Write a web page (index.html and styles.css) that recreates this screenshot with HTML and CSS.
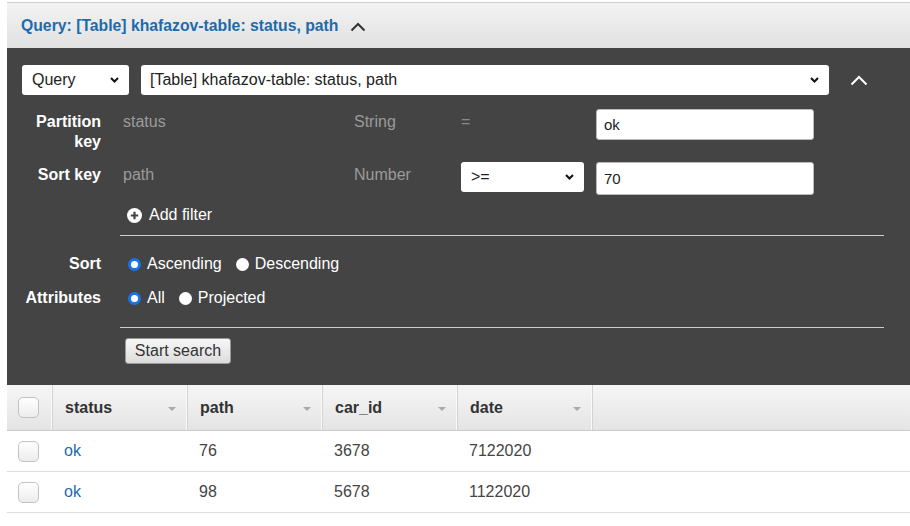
FILE: index.html
```html
<!DOCTYPE html>
<html>
<head>
<meta charset="utf-8">
<link rel="stylesheet" href="styles.css">
</head>
<body>
<div class="page">
  <div class="header">
    <span class="title">Query: [Table] khafazov-table: status, path</span>
    <svg class="hchev" width="16" height="10" viewBox="0 0 16 10"><polyline points="1.5,8.5 8,2 14.5,8.5" fill="none" stroke="#333" stroke-width="2"/></svg>
  </div>
  <div class="panel">
    <div class="toprow">
      <div class="sel sel-query"><span>Query</span><svg width="9" height="6" viewBox="0 0 9 6"><polyline points="1,1 4.5,4.5 8,1" fill="none" stroke="#111" stroke-width="2"/></svg></div>
      <div class="sel sel-table"><span>[Table] khafazov-table: status, path</span><svg width="9" height="6" viewBox="0 0 9 6"><polyline points="1,1 4.5,4.5 8,1" fill="none" stroke="#111" stroke-width="2"/></svg></div>
      <svg class="pchev" width="18" height="11" viewBox="0 0 18 11"><polyline points="1.5,9.5 9,2 16.5,9.5" fill="none" stroke="#fff" stroke-width="2"/></svg>
    </div>
    <div class="keyrow kr1">
      <div class="lbl">Partition<br>key</div>
      <div class="muted">status</div>
      <div class="muted">String</div>
      <div class="muted eq">=</div>
      <input class="inp" value="ok">
    </div>
    <div class="keyrow kr2">
      <div class="lbl">Sort key</div>
      <div class="muted">path</div>
      <div class="muted">Number</div>
      <div class="sel sel-op"><span>&gt;=</span><svg width="9" height="6" viewBox="0 0 9 6"><polyline points="1,1 4.5,4.5 8,1" fill="none" stroke="#111" stroke-width="2"/></svg></div>
      <input class="inp inp2" value="70">
    </div>
    <div class="addfilter">
      <svg width="15" height="15" viewBox="0 0 15 15"><circle cx="7.5" cy="7.5" r="7.5" fill="#fff"/><path d="M7.5 3.8v7.4M3.8 7.5h7.4" stroke="#444" stroke-width="2.2"/></svg>
      <span>Add filter</span>
    </div>
    <div class="divider d1"></div>
    <div class="optrow o1">
      <div class="lbl">Sort</div>
      <label class="opt"><span class="radio on"></span>Ascending</label>
      <label class="opt"><span class="radio"></span>Descending</label>
    </div>
    <div class="optrow o2">
      <div class="lbl">Attributes</div>
      <label class="opt"><span class="radio on"></span>All</label>
      <label class="opt"><span class="radio"></span>Projected</label>
    </div>
    <div class="divider d2"></div>
    <div class="btnrow"><button class="btn">Start search</button></div>
  </div>
  <div class="table">
    <div class="thead">
      <div class="cell cbcol"><span class="cb"></span></div>
      <div class="cell col"><b>status</b><i class="tri"></i></div>
      <div class="cell col"><b>path</b><i class="tri"></i></div>
      <div class="cell col"><b>car_id</b><i class="tri"></i></div>
      <div class="cell col"><b>date</b><i class="tri"></i></div>
    </div>
    <div class="trow">
      <div class="cell cbcol"><span class="cb"></span></div>
      <div class="cell col link">ok</div>
      <div class="cell col">76</div>
      <div class="cell col">3678</div>
      <div class="cell col">7122020</div>
    </div>
    <div class="trow">
      <div class="cell cbcol"><span class="cb"></span></div>
      <div class="cell col link">ok</div>
      <div class="cell col">98</div>
      <div class="cell col">5678</div>
      <div class="cell col">1122020</div>
    </div>
  </div>
</div>
</body>
</html>
```

FILE: styles.css
```css
html, body { margin: 0; padding: 0; background: #fff; }
body { font-family: "Liberation Sans", Arial, sans-serif; font-size: 16px; color: #444; }
.page { padding: 2px 0 0 7px; width: 903px; }

.header {
  height: 45px;
  border-top: 1px solid #cfcfcf;
  background: linear-gradient(#f3f3f3, #e1e1e1);
  display: flex; align-items: center;
  padding-left: 14px;
}
.title { color: #1e6bab; font-weight: bold; font-size: 15.75px; }
.hchev { margin-left: 12px; margin-top: 3px; }

.panel { background: #444; padding: 17px 0 21px 15px; color: #fff; }
.toprow { display: flex; align-items: center; height: 30px; }
.sel {
  background: #fff; border-radius: 3px; height: 30px; box-sizing: border-box;
  display: flex; align-items: center; justify-content: space-between;
  padding: 0 10px; color: #222; font-size: 16px;
}
.sel svg { flex: none; }
.sel-query { width: 107px; }
.sel-table { width: 688px; margin-left: 12px; padding-left: 9px; }
.pchev { margin-left: 21px; margin-top: 1px; }

.keyrow { display: grid; grid-template-columns: 101px 231px 107px 135px 218px; align-items: start; }
.kr1 { margin-top: 15px; height: 42px; }
.kr2 { margin-top: 11px; height: 32px; }
.lbl { font-weight: bold; color: #fff; text-align: right; padding-right: 22px; line-height: 20px; padding-top: 2px; }
.muted { color: #9b9b9b; line-height: 20px; padding-top: 2px; }
.eq { color: #8a8a8a; }
.inp {
  font-family: "Liberation Sans", Arial, sans-serif; font-size: 15px; color: #222;
  height: 31px; box-sizing: border-box; border: 1px solid #bbb; border-radius: 3px;
  padding: 0 7px; margin: -1px 0 0 0; width: 218px; outline: none;
}
.inp2 { height: 33px; margin-top: -1px; }
.sel-op { width: 123px; margin-top: -1px; }

.addfilter { margin: 10px 0 0 105px; height: 20px; display: flex; align-items: center; }
.addfilter svg { margin-right: 7px; margin-top: 1px; }
.divider { height: 1px; background: #cdcdcd; margin-left: 98px; margin-right: 26px; }
.d1 { margin-top: 10px; }
.d2 { margin-top: 19px; }

.optrow { display: flex; align-items: center; height: 20px; }
.optrow .lbl { width: 79px; padding-top: 0; }
.o1 { margin-top: 18px; }
.o2 { margin-top: 14px; }
.opt { display: flex; align-items: center; margin-right: 9px; color: #fff; }
.radio {
  width: 13px; height: 13px; box-sizing: border-box; border-radius: 50%;
  background: #fff; margin: 0 6px 0 5px; flex: none;
}
.radio.on { border: 3px solid #1a73e8; background: #fff; }

.btnrow { margin: 10px 0 0 103px; }
.btn {
  font-family: "Liberation Sans", Arial, sans-serif; font-size: 16px; color: #333;
  height: 26px; width: 106px; padding: 0; border: 1px solid #999; border-radius: 3px;
  background: linear-gradient(#f7f7f7, #dcdcdc);
}

.table { width: 903px; }
.thead {
  display: flex; height: 45px; border-bottom: 1px solid #cacaca;
  background: linear-gradient(#f6f6f6, #e4e4e4);
}
.trow { display: flex; height: 40px; border-bottom: 1px solid #dedede; }
.cell { display: flex; align-items: center; box-sizing: border-box; }
.cbcol { width: 46px; padding-left: 11px; }
.col { width: 135px; padding-left: 11px; }
.thead .cell { border-right: 1px solid #d3d3d3; box-shadow: inset -1px 0 0 #fafafa; }
.thead .col { padding-left: 12px; padding-right: 11px; justify-content: space-between; }
.thead b { color: #333; font-weight: bold; }
.tri { width: 0; height: 0; border-left: 4px solid transparent; border-right: 4px solid transparent; border-top: 4px solid #aaa; margin-top: 2px; }
.cb {
  width: 21px; height: 21px; box-sizing: border-box; border: 1px solid #c2c2c2; border-radius: 5px;
  background: linear-gradient(#fff, #ececec);
}
.link { color: #1e6bab; }
```
